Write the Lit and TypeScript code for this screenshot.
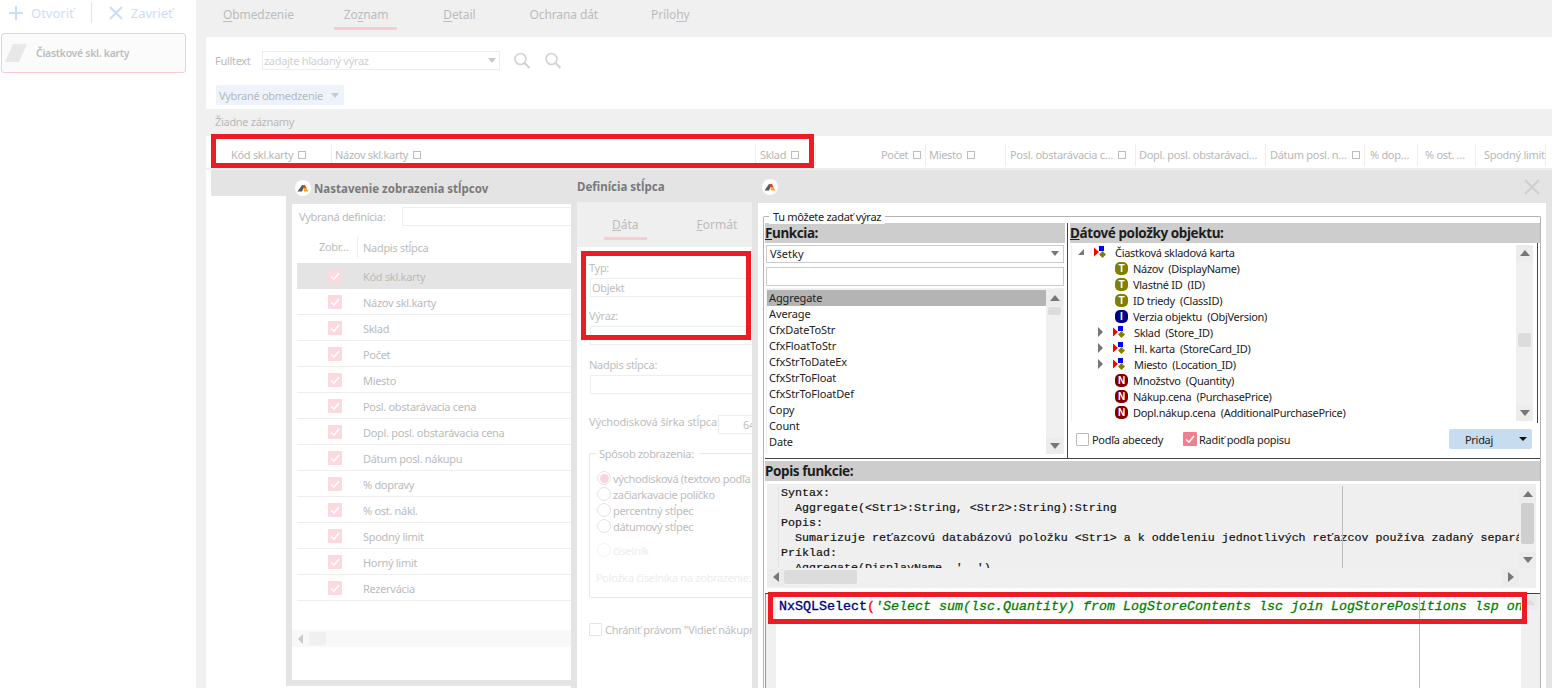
import { LitElement, html, css, nothing } from 'lit';
import { customElement } from 'lit/decorators.js';

const columns = [
  { t: 'Kód skl.karty', w: 126, pl: 25, box: true },
  { t: 'Názov skl.karty', w: 424, pl: 3, box: true },
  { t: 'Sklad', w: 60, pl: 4, box: true },
  { t: 'Počet', w: 110, pl: 65, box: true },
  { t: 'Miesto', w: 80, pl: 3, box: true },
  { t: 'Posl. obstarávacia c…', w: 130, pl: 4, box: true },
  { t: 'Dopl. posl. obstarávaci…', w: 130, pl: 3, box: false },
  { t: 'Dátum posl. n…', w: 99, pl: 4, box: true },
  { t: '% dop…', w: 53, pl: 5, box: false },
  { t: '% ost. …', w: 58, pl: 7, box: false },
  { t: 'Spodný limit', w: 70, pl: 8, box: false },
];

const columnRows = [
  'Kód skl.karty', 'Názov skl.karty', 'Sklad', 'Počet', 'Miesto', 'Posl. obstarávacia cena',
  'Dopl. posl. obstarávacia cena', 'Dátum posl. nákupu', '% dopravy', '% ost. nákl.',
  'Spodný limit', 'Horný limit', 'Rezervácia',
];

const functions = [
  'Aggregate', 'Average', 'CfxDateToStr', 'CfxFloatToStr', 'CfxStrToDateEx',
  'CfxStrToFloat', 'CfxStrToFloatDef', 'Copy', 'Count', 'Date',
];

const tree = [
  { k: 'T', t: 'Názov  (DisplayName)' },
  { k: 'T', t: 'Vlastné ID  (ID)' },
  { k: 'T', t: 'ID triedy  (ClassID)' },
  { k: 'I', t: 'Verzia objektu  (ObjVersion)' },
  { k: 'O', t: 'Sklad  (Store_ID)' },
  { k: 'O', t: 'Hl. karta  (StoreCard_ID)' },
  { k: 'O', t: 'Miesto  (Location_ID)' },
  { k: 'N', t: 'Množstvo  (Quantity)' },
  { k: 'N', t: 'Nákup.cena  (PurchasePrice)' },
  { k: 'N', t: 'Dopl.nákup.cena  (AdditionalPurchasePrice)' },
];

const logo = html`<svg class="logo" viewBox="0 0 16 16" width="16" height="16">
  <circle cx="8" cy="8" r="8" fill="#fff"></circle>
  <polygon points="2.5,11.5 7,5 10,5 7,11.5" fill="#5a5a5a"></polygon>
  <polygon points="7,5 10,5 11.5,8 8.5,8" fill="#e8412c"></polygon>
  <polygon points="8.5,8 11.5,8 13.5,11.5 9,11.5" fill="#f5a623"></polygon>
</svg>`;

const objIcon = html`<svg class="obj" viewBox="0 0 13 13" width="13" height="13">
  <polygon points="0,1.5 5,6 0,10.5" fill="#f00"></polygon>
  <rect x="5" y="0" width="5" height="5" fill="#00f"></rect>
  <polygon points="8.5,5 12,8.5 8.5,12 5,8.5" fill="#808000"></polygon>
</svg>`;

const searchIcon = (mark: boolean) => html`<svg viewBox="0 0 18 18" width="18" height="18">
  <circle cx="7.5" cy="7" r="5.5" fill="none" stroke="#d2d2d2" stroke-width="1.6"></circle>
  <line x1="11.5" y1="11" x2="16.5" y2="16" stroke="#d2d2d2" stroke-width="2"></line>
  ${mark
    ? html`<line x1="2" y1="15.5" x2="10" y2="15.5" stroke="#f4b8c2"></line>
        <line x1="2" y1="17.5" x2="10" y2="17.5" stroke="#f4b8c2"></line>`
    : nothing}
</svg>`;

@customElement('app-root')
export class AppRoot extends LitElement {
  static override styles = css`
    :host {
      display: block;
      width: 1552px;
      height: 688px;
      overflow: hidden;
      position: relative;
      background: #fff;
      font-family: 'Noto Sans', 'Liberation Sans', sans-serif;
      font-size: 11px;
      letter-spacing: -0.3px;
      color: #b9b9b9;
    }
    .page { display: flex; height: 688px; }

    /* levy panel */
    .side { width: 196px; flex: none; padding-top: 2px; box-sizing: border-box; }
    .toolbar { display: flex; align-items: center; height: 21px; font-size: 13px; letter-spacing: 0; color: #c9def6; padding-left: 9px; }
    .toolbar svg { flex: none; }
    .toolbar .lbl { margin-left: 8px; }
    .toolbar .sep { width: 1px; height: 21px; background: #dfe5ee; margin: 0 17px 0 17px; }
    .card {
      display: flex; align-items: center; margin: 10px 0 0 1px; width: 185px; height: 40px; box-sizing: border-box;
      border: 1px solid #f8c9d1; border-radius: 3px; background: #fbfbfb; font-weight: 600; color: #bdbdbd; font-size: 10.5px;
    }
    .para { width: 14px; height: 18px; margin: 0 13px 0 7px; background: #e8e8e8; transform: skewX(-24deg); }

    /* hlavna cast */
    .main { flex: 1; min-width: 0; background: #f0f0f0; display: flex; flex-direction: column; }
    .tabs { display: flex; height: 37px; flex: none; font-size: 12px; color: #bcbcbc; padding-left: 27px; letter-spacing: -0.1px; }
    .tab { position: relative; padding-top: 6px; height: 24px; }
    .tab u { text-underline-offset: 2px; }
    .tab.on::after { content: ''; position: absolute; left: -10px; right: -9px; top: 27px; height: 3px; background: #f8cbd3; }
    .filter { margin-left: 10px; height: 72px; flex: none; background: #fff; box-sizing: border-box; padding: 14px 0 0 9px; }
    .ft { display: flex; align-items: center; height: 19px; }
    .ft .name { width: 47px; }
    .ft .box {
      width: 238px; height: 19px; box-sizing: border-box; border: 1px solid #ededed; color: #cfcfcf;
      display: flex; align-items: center; justify-content: space-between; padding: 0 3px 0 1px;
    }
    .ft .ic { margin-left: 13px; width: 18px; height: 18px; }
    .tri { width: 0; height: 0; border-left: 4px solid transparent; border-right: 4px solid transparent; border-top: 5px solid #c9c9c9; flex: none; }
    .chip {
      display: flex; align-items: center; justify-content: space-between; margin: 15px 0 0 1px; width: 128px; height: 20px;
      box-sizing: border-box; padding: 0 5px 0 3px; background: #eef3fb; border-radius: 2px; color: #b5b8bd;
    }
    .band { height: 27px; flex: none; margin-left: 19px; line-height: 26px; }
    .head { height: 34px; flex: none; margin-left: 10px; background: #fff; display: flex; box-sizing: border-box; border-bottom: 2px solid #eee; }
    .col { height: 22px; margin-top: 8px; padding-bottom: 1px; box-sizing: border-box; border-right: 1px solid #eee; display: flex; align-items: center; gap: 5px; flex: none; white-space: nowrap; color: #b7b7b7; }
    .mark { width: 6px; height: 6px; border: 1px solid #bdbdbd; flex: none; }

    /* plocha s oknami */
    .desk { position: relative; flex: 1; min-height: 0; }
    .under { position: absolute; left: 10px; top: 0; right: 0; bottom: 0; background: #fff; padding-left: 5px; }
    .under div { height: 26px; background: #e4e4e4; }
    .win { position: absolute; top: 0; box-sizing: border-box; background: #e4e4e4; overflow: hidden; }

    .w1 { left: 90px; top: 2px; width: 285px; height: 514px; padding: 0 0 6px 6px; }
    .w1title { height: 32px; display: flex; align-items: center; font-weight: 700; letter-spacing: 0; color: #7a7a7a; font-size: 11.5px; gap: 3px; }
    .w1title .logo { margin-left: 3px; }
    .w1body { background: #fff; height: 476px; position: relative; }
    .def { display: flex; align-items: center; height: 19px; padding: 3px 0 0 7px; }
    .def span { width: 103px; }
    .def i { flex: 1; height: 19px; box-sizing: border-box; border: 1px solid #eee; border-right: 0; }
    .lh { display: flex; align-items: center; height: 26px; margin: 8px 0 3px 5px; color: #bcbcbc; }
    .lh .a { width: 61px; box-sizing: border-box; padding-left: 22px; height: 22px; line-height: 22px; border-right: 1px solid #eee; white-space: nowrap; }
    .lh .b { padding-left: 5px; }
    .lrow { display: flex; align-items: center; height: 26px; margin-left: 5px; padding-top: 1px; box-sizing: border-box; border-bottom: 1px solid #eee; color: #bbb; }
    .lrow.sel { background: #e4e4e4; border-bottom: 0; }
    .tick { width: 14px; height: 14px; background: #fcd9df; border-radius: 1px; margin: -1px 21px 0 31px; flex: none; display: flex; }
    .hs { display: flex; align-items: center; height: 17px; background: #f8f8f8; margin-top: 29px; padding-left: 6px; }
    .hs .la { width: 0; height: 0; border-top: 5px solid transparent; border-bottom: 5px solid transparent; border-right: 5px solid #c9c9c9; }
    .hs .th { width: 17px; height: 13px; background: #f0f0f0; margin-left: 6px; border-radius: 1px; }

    .w2 { left: 375px; width: 181px; height: 518px; padding: 0 0 0 6px; }
    .w2title { height: 32px; line-height: 33px; font-weight: 700; letter-spacing: 0; color: #7a7a7a; font-size: 11.5px; }
    .w2tabs { display: flex; height: 45px; background: #efefef; font-size: 12px; letter-spacing: 0; color: #bcbcbc; padding-left: 35px; box-sizing: border-box; }
    .w2tabs div { position: relative; padding-top: 14px; margin-right: 58px; }
    .w2tabs .on::after { content: ''; position: absolute; left: -8px; right: -8px; top: 35px; height: 3px; background: #f8cbd3; }
    .w2body { background: #fff; height: 441px; width: 175px; padding: 14px 0 0 12px; box-sizing: border-box; color: #bdbdbd; white-space: nowrap; overflow: hidden; }
    .lab { height: 14px; line-height: 14px; }
    .inp { height: 19px; margin: 3px 0 12px 1px; width: 180px; box-sizing: border-box; border: 1px solid #eee; line-height: 17px; padding-left: 1px; }
    .widthrow { display: flex; align-items: center; height: 19px; margin-top: 21px; letter-spacing: -0.1px; }
    .widthrow span { width: 129px; padding-bottom: 6px; }
    .widthrow .inp { margin: 0; width: 60px; padding-left: 24px; flex: none; }
    .fs { position: relative; margin-top: 19px; width: 180px; height: 145px; box-sizing: border-box; border: 1px solid #e8e8e8; border-radius: 2px; padding: 16px 0 0 7px; }
    .fs .leg { position: absolute; left: 6px; top: -7px; background: #fff; padding: 0 5px 0 3px; line-height: 14px; }
    .rad { display: flex; align-items: center; height: 16px; gap: 2px; }
    .dot { width: 14px; height: 14px; box-sizing: border-box; border: 1px solid #e4e4e4; border-radius: 50%; flex: none; display: flex; align-items: center; justify-content: center; }
    .dot.on::after { content: ''; width: 9px; height: 9px; border-radius: 50%; background: #fcd3da; }
    .fs .dim { color: #ececec; }
    .fs .dim .dot { border-color: #f3f3f3; }
    .prot { display: flex; align-items: center; gap: 3px; margin-top: 24px; height: 14px; }
    .cb { width: 13px; height: 13px; box-sizing: border-box; border: 1px solid #e4e4e4; flex: none; border-radius: 1px; }

    .w3 { left: 556px; width: 800px; height: 518px; padding: 0 6px 0 6px; }
    .w3title { height: 33px; display: flex; align-items: center; justify-content: space-between; padding: 0 6px 0 4px; }
    .w3body { background: #fff; height: 485px; box-sizing: border-box; padding: 13px 5px 0 5px; color: #222; }
    .grp { position: relative; height: 480px; box-sizing: border-box; border: 1px solid #b4b4b4; border-bottom: 0; border-radius: 2px 2px 0 0; padding: 6px 0 0 1px; }
    .grp .leg { position: absolute; left: 5px; top: -7px; background: #fff; padding: 0 4px; line-height: 14px; color: #222; }
    .top { display: flex; height: 236px; border-bottom: 1px solid #444; box-sizing: border-box; }
    .fn { width: 303px; box-sizing: border-box; border-right: 1px solid #444; flex: none; }
    .bar { height: 20px; line-height: 20px; background: #cdcdcd; font-weight: 700; font-size: 13.5px; letter-spacing: -0.4px; color: #1d1d1d; }
    .fn .bar { width: 300px; }
    .combo { display: flex; align-items: center; justify-content: space-between; width: 298px; height: 18px; margin: 2px 0 0 1px; padding: 0 4px 2px 3px; box-sizing: border-box; border: 1px solid #ccc; letter-spacing: 0; }
    .combo .tri { border-top-color: #777; border-left-width: 4.5px; border-right-width: 4.5px; }
    .filterbox { width: 298px; height: 19px; margin: 4px 0 0 1px; box-sizing: border-box; border: 1px solid #ccc; }
    .flist { display: flex; width: 298px; height: 166px; margin: 2px 0 0 1px; box-sizing: border-box; background: #f0f0f0; padding: 2px 1px 0 1px; }
    .fitems { flex: 1; background: #fff; height: 164px; overflow: hidden; letter-spacing: -0.1px; }
    .fitem { height: 16px; line-height: 16px; padding-left: 2px; }
    .fitem.on { background: #b4b4b4; }
    .obj-col { margin-left: 2px; width: 470px; flex: none; }
    .treewrap { width: 468px; height: 180px; box-sizing: border-box; border-right: 1px solid #444; padding: 2px 4px 2px 1px; }
    .treebox { display: flex; height: 176px; background: #f0f0f0; padding-left: 1px; }
    .treeitems { flex: 1; background: #fff; overflow: hidden; }
    .trow { display: flex; align-items: center; height: 16px; padding-bottom: 2px; box-sizing: border-box; white-space: pre; }
    .twist.r { width: 0; height: 0; border-top: 5px solid transparent; border-bottom: 5px solid transparent; border-left: 5px solid #777; margin: 0 10px 0 26px; flex: none; }
    .twist.d { width: 0; height: 0; border-left: 6px solid transparent; border-bottom: 6px solid #777; margin: 0 10px 0 6px; flex: none; }
    .spc { width: 43px; flex: none; }
    .tk { width: 13px; height: 13px; border-radius: 5px; color: #fff; font: 700 10px/13px 'Liberation Sans', sans-serif; letter-spacing: 0; text-align: center; flex: none; margin-right: 5px; }
    .tk.T { background: #808000; }
    .tk.I { background: #000080; }
    .tk.N { background: #800000; }
    .obj { margin-right: 8px; flex: none; }
    .opts { display: flex; align-items: center; height: 20px; margin-top: 6px; padding-left: 6px; position: relative; }
    .opts .cb { border-color: #bbb; margin-right: 3px; }
    .opts .gap { width: 20px; }
    .pink { width: 14px; height: 14px; background: #f0808f; border-radius: 1px; margin-right: 2px; display: flex; flex: none; }
    .add {
      display: flex; align-items: center; justify-content: space-between; margin-left: auto; margin-right: 8px; width: 83px; height: 20px;
      box-sizing: border-box; padding: 0 5px 0 16px; background: #c8dcf0; border-radius: 2px; color: #222;
    }
    .add i { width: 0; height: 0; border-left: 4px solid transparent; border-right: 4px solid transparent; border-top: 4px solid #111; }
    .popis { margin-top: 2px; }
    .help { position: relative; display: grid; grid-template-columns: 1fr 17px; grid-template-rows: 82px 18px; width: 769px; height: 104px; margin: 3px 0 0 2px; background: #efefef; padding-top: 2px; box-sizing: border-box; }
    .code { font: 400 11.67px/15px 'Liberation Mono', monospace; letter-spacing: 0; color: #111; margin: 0; padding-left: 14px; overflow: hidden; white-space: pre; -webkit-text-stroke: 0.2px #111; }
    .help .gut { position: absolute; left: 11px; top: 2px; width: 1px; height: 82px; background: #e4e4e4; }
    .help .mg { position: absolute; left: 575px; top: 2px; width: 1px; height: 82px; background: #bdbdbd; }
    .sb { display: flex; flex-direction: column; background: #f0f0f0; }
    .btn { height: 16px; width: 17px; flex: none; background: #ececec; display: flex; align-items: center; justify-content: center; }
    .up { width: 0; height: 0; border-left: 5px solid transparent; border-right: 5px solid transparent; border-bottom: 6px solid #777; }
    .dn { width: 0; height: 0; border-left: 5px solid transparent; border-right: 5px solid transparent; border-top: 6px solid #777; }
    .lf { width: 0; height: 0; border-top: 5px solid transparent; border-bottom: 5px solid transparent; border-right: 6px solid #777; }
    .rt { width: 0; height: 0; border-top: 5px solid transparent; border-bottom: 5px solid transparent; border-left: 6px solid #777; }
    .th { background: #d8d8d8; border-radius: 2px; width: 13px; margin-left: 2px; flex: none; }
    .sp { flex: 1; }
    .hbar { display: flex; align-items: center; grid-column: 1; height: 18px; background: #f0f0f0; }
    .hbar .th { width: 73px; height: 14px; margin: 0; background: #dcdcdc; }
    .hbar .btn { height: 17px; }
    .editor { display: flex; margin-top: 5px; height: 95px; border-top: 1px solid #444; position: relative; }
    .edgut { width: 11px; border-left: 1px solid #999; background: #f0f0f0; flex: none; box-sizing: border-box; }
    .edtext { flex: 1; font: 400 13.33px/16px 'Liberation Mono', monospace; letter-spacing: 0; white-space: pre; overflow: hidden; padding: 5px 0 0 3px; color: #000080; -webkit-text-stroke: 0.35px #000080; }
    .edtext em { color: #008000; -webkit-text-stroke: 0.3px #008000; }
    .edtext b { color: #f00; font-weight: 400; -webkit-text-stroke: 0.3px #f00; }
    .edmg { position: absolute; left: 654px; top: 0; bottom: 0; width: 1px; background: #bdbdbd; }
    .edsb { width: 19px; flex: none; background: #f0f0f0; }
    .edsb .btn { width: 17px; background: #ececec; }

    /* cervene oznacenia */
    .hl { position: absolute; box-sizing: border-box; border: 5px solid #ed1c24; pointer-events: none; }
    .hl1 { left: 211px; top: 134px; width: 603px; height: 34px; }
    .hl2 { left: 581px; top: 251px; width: 170px; height: 89px; }
    .hl3 { left: 768px; top: 592px; width: 759px; height: 32px; }
  `;

  private check(stroke: string) {
    return html`<svg viewBox="0 0 14 14" width="14" height="14">
      <polyline points="3,7.5 6,10 11,4" fill="none" stroke="${stroke}" stroke-width="1.6"></polyline>
    </svg>`;
  }

  private renderSide() {
    return html`<div class="side">
      <div class="toolbar">
        <svg viewBox="0 0 14 14" width="14" height="14"><path d="M7 0v14M0 7h14" stroke="#c9def6" stroke-width="2"></path></svg>
        <span class="lbl">Otvoriť</span>
        <span class="sep"></span>
        <svg viewBox="0 0 14 14" width="14" height="14"><path d="M1 1l12 12M13 1L1 13" stroke="#c9def6" stroke-width="2"></path></svg>
        <span class="lbl">Zavrieť</span>
      </div>
      <div class="card"><span class="para"></span>Čiastkové skl. karty</div>
    </div>`;
  }

  private renderTop() {
    return html`<div class="tabs">
        <div class="tab" style="margin-right:50px"><u>O</u>bmedzenie</div>
        <div class="tab on" style="margin-right:55px">Zo<u>z</u>nam</div>
        <div class="tab" style="margin-right:54px"><u>D</u>etail</div>
        <div class="tab" style="margin-right:53px">Ochrana dát</div>
        <div class="tab">Prílo<u>h</u>y</div>
      </div>
      <div class="filter">
        <div class="ft">
          <span class="name">Fulltext</span>
          <div class="box">zadajte hľadaný výraz<span class="tri"></span></div>
          <span class="ic">${searchIcon(false)}</span>
          <span class="ic">${searchIcon(true)}</span>
        </div>
        <div class="chip">Vybrané obmedzenie<span class="tri"></span></div>
      </div>
      <div class="band">Žiadne záznamy</div>
      <div class="head">
        ${columns.map(
          (c) => html`<div class="col" style="width:${c.w}px;padding-left:${c.pl}px">
            ${c.t}${c.box ? html`<span class="mark"></span>` : nothing}
          </div>`,
        )}
      </div>`;
  }

  private renderColumnsWin() {
    return html`<div class="win w1">
      <div class="w1title">${logo}Nastavenie zobrazenia stĺpcov</div>
      <div class="w1body">
        <div class="def"><span>Vybraná definícia:</span><i></i></div>
        <div class="lh"><div class="a">Zobr…</div><div class="b">Nadpis stĺpca</div></div>
        ${columnRows.map(
          (r, i) => html`<div class="lrow ${i === 0 ? 'sel' : ''}">
            <span class="tick">${this.check('#fff')}</span>${r}
          </div>`,
        )}
        <div class="hs"><span class="la"></span><span class="th"></span></div>
      </div>
    </div>`;
  }

  private renderDefinitionWin() {
    return html`<div class="win w2">
      <div class="w2title">Definícia stĺpca</div>
      <div class="w2tabs">
        <div class="on"><u>D</u>áta</div>
        <div><u>F</u>ormát</div>
      </div>
      <div class="w2body">
        <div class="lab">Typ:</div>
        <div class="inp">Objekt</div>
        <div class="lab">Výraz:</div>
        <div class="inp" style="margin-bottom:13px"></div>
        <div class="lab">Nadpis stĺpca:</div>
        <div class="inp"></div>
        <div class="widthrow"><span>Východisková šírka stĺpca:</span><div class="inp">64</div></div>
        <div class="fs">
          <span class="leg">Spôsob zobrazenia:</span>
          <div class="rad"><span class="dot on"></span>východisková (textovo podľa</div>
          <div class="rad"><span class="dot"></span>začiarkavacie políčko</div>
          <div class="rad"><span class="dot"></span>percentný stĺpec</div>
          <div class="rad"><span class="dot"></span>dátumový stĺpec</div>
          <div class="rad dim" style="margin-top:8px"><span class="dot"></span>číselník</div>
          <div class="dim" style="margin:12px 0 0 -1px">Položka číselníka na zobrazenie:</div>
        </div>
        <div class="prot"><span class="cb"></span>Chrániť právom "Vidieť nákupn</div>
      </div>
    </div>`;
  }

  private renderTreeRow(r: { k: string; t: string }) {
    if (r.k === 'O') {
      return html`<div class="trow"><span class="twist r"></span>${objIcon}${r.t}</div>`;
    }
    return html`<div class="trow"><span class="spc"></span><span class="tk ${r.k}">${r.k}</span>${r.t}</div>`;
  }

  private renderExpressionWin() {
    return html`<div class="win w3">
      <div class="w3title">
        ${logo}
        <svg viewBox="0 0 16 16" width="16" height="16"><path d="M1 1l14 14M15 1L1 15" stroke="#cfcfcf" stroke-width="2"></path></svg>
      </div>
      <div class="w3body">
        <div class="grp">
          <span class="leg">Tu môžete zadať výraz</span>
          <div class="top">
            <div class="fn">
              <div class="bar"><u>F</u>unkcia:</div>
              <div class="combo">Všetky<span class="tri"></span></div>
              <div class="filterbox"></div>
              <div class="flist">
                <div class="fitems">
                  ${functions.map((f, i) => html`<div class="fitem ${i === 0 ? 'on' : ''}">${f}</div>`)}
                </div>
                <div class="sb">
                  <div class="btn"><span class="up"></span></div>
                  <div class="th" style="height:8px;margin-top:1px;background:#dcdcdc"></div>
                  <div class="sp"></div>
                  <div class="btn"><span class="dn"></span></div>
                </div>
              </div>
            </div>
            <div class="obj-col">
              <div class="bar"><u>D</u>átové položky objektu:</div>
              <div class="treewrap">
                <div class="treebox">
                  <div class="treeitems">
                    <div class="trow"><span class="twist d"></span>${objIcon}Čiastková skladová karta</div>
                    ${tree.map((r) => this.renderTreeRow(r))}
                  </div>
                  <div class="sb">
                    <div class="btn"><span class="up"></span></div>
                    <div class="th" style="height:14px;margin-top:72px;background:#dcdcdc"></div>
                    <div class="sp"></div>
                    <div class="btn"><span class="dn"></span></div>
                  </div>
                </div>
              </div>
              <div class="opts">
                <span class="cb"></span>Podľa abecedy<span class="gap"></span>
                <span class="pink">${this.check('#fff')}</span>Radiť podľa popisu
                <div class="add">Pridaj<i></i></div>
              </div>
            </div>
          </div>
          <div class="bar popis">Popis funkcie:</div>
          <div class="help">
            <pre class="code">Syntax:
  Aggregate(&lt;Str1&gt;:String, &lt;Str2&gt;:String):String
Popis:
  Sumarizuje reťazcovú databázovú položku &lt;Str1&gt; a k oddeleniu jednotlivých reťazcov používa zadaný separá
Príklad:
  Aggregate(DisplayName, ', ')</pre>
            <div class="sb">
              <div class="btn"><span class="up"></span></div>
              <div class="th" style="height:41px;margin-top:1px;background:#cfcfcf"></div>
              <div class="sp"></div>
              <div class="btn"><span class="dn"></span></div>
            </div>
            <div class="hbar">
              <div class="btn"><span class="lf"></span></div>
              <div class="th"></div>
              <div class="sp"></div>
              <div class="btn"><span class="rt"></span></div>
            </div>
            <span class="gut"></span>
            <span class="mg"></span>
          </div>
          <div class="editor">
            <div class="edgut"></div>
            <div class="edtext">NxSQLSelect<b>(</b><em>'Select sum(lsc.Quantity) from LogStoreContents lsc join LogStorePositions lsp on</em></div>
            <div class="edsb"><div class="btn"><span class="up" style="border-bottom-color:#ddd"></span></div></div>
            <span class="edmg"></span>
          </div>
        </div>
      </div>
    </div>`;
  }

  override render() {
    return html`<div class="page">
        ${this.renderSide()}
        <div class="main">
          ${this.renderTop()}
          <div class="desk">
            <div class="under"><div></div></div>
            ${this.renderColumnsWin()} ${this.renderDefinitionWin()} ${this.renderExpressionWin()}
          </div>
        </div>
      </div>
      <div class="hl hl1"></div>
      <div class="hl hl2"></div>
      <div class="hl hl3"></div>`;
  }
}

declare global {
  interface HTMLElementTagNameMap {
    'app-root': AppRoot;
  }
}
